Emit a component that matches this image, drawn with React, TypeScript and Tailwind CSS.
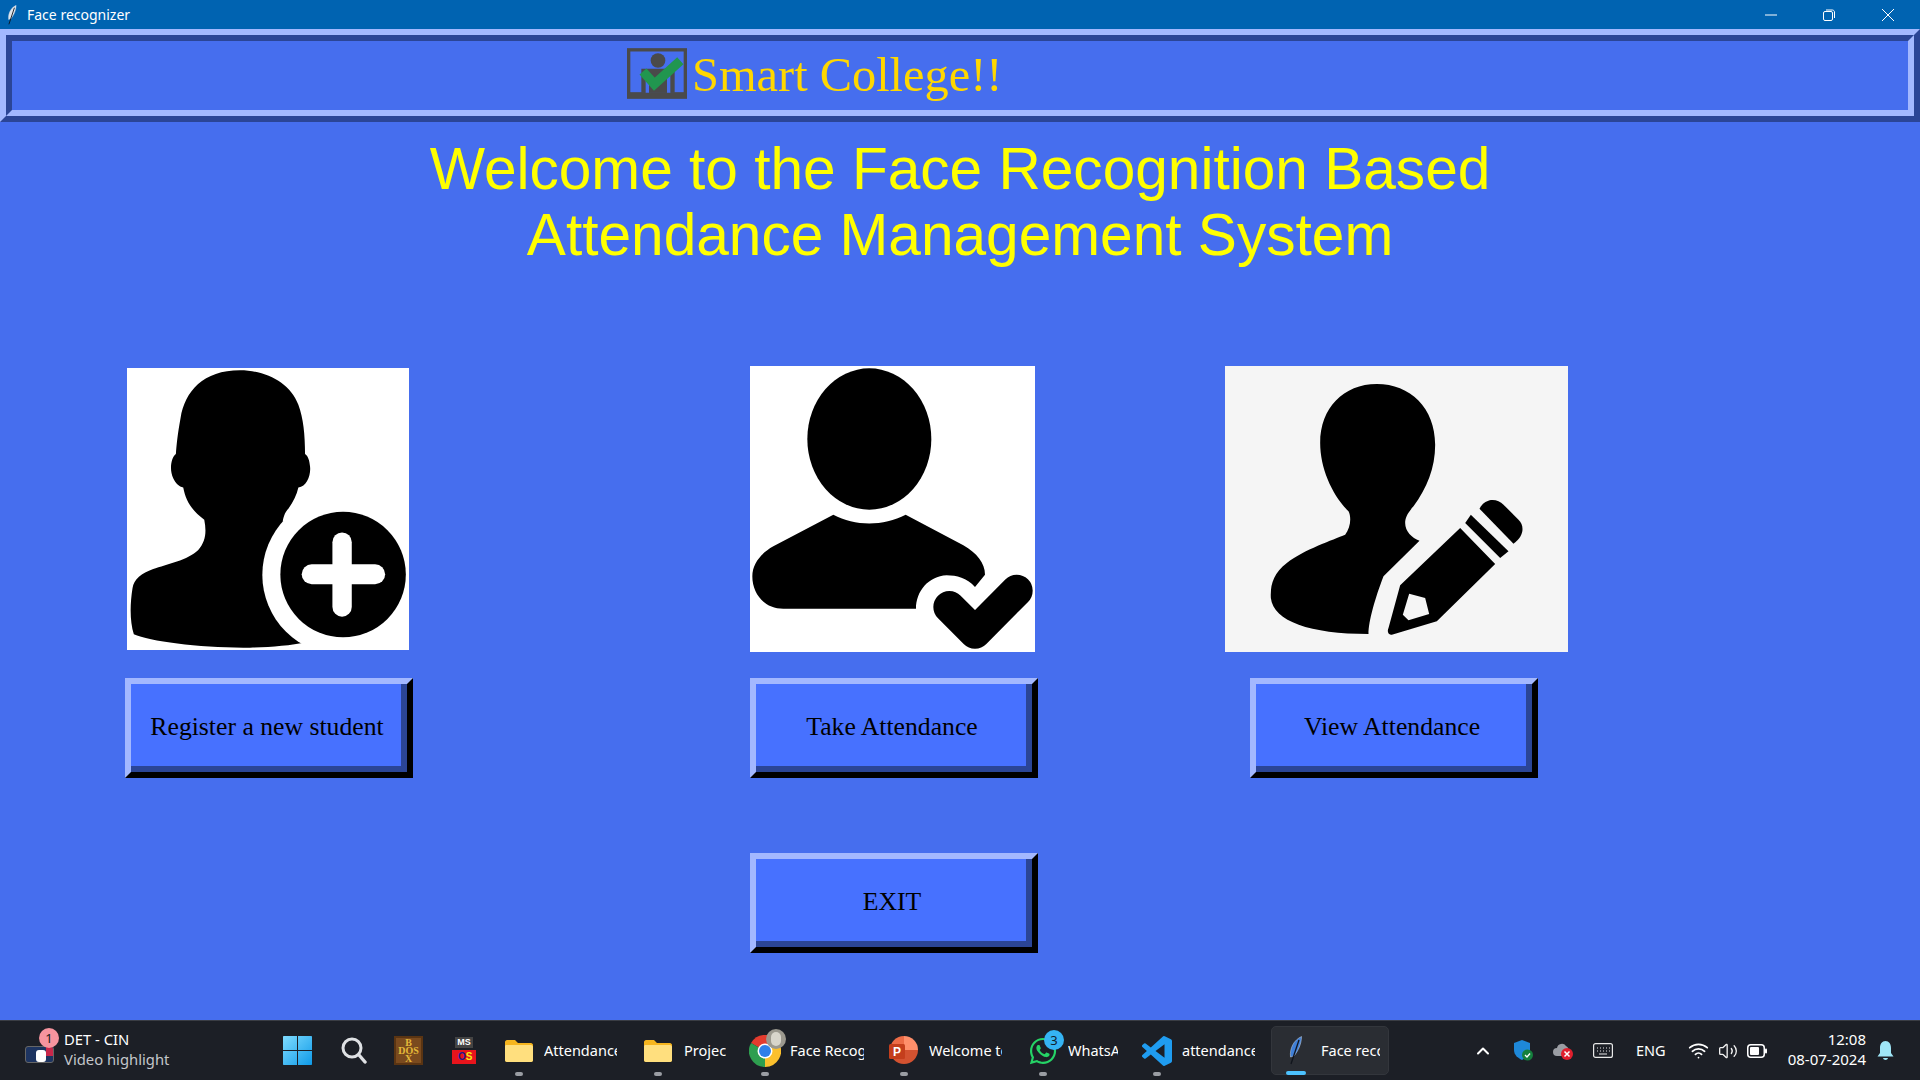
import type { ReactNode } from "react";
import { FaWhatsapp } from "react-icons/fa";
import { ChevronUp, Volume2, Wifi } from "lucide-react";

const SEGOE = "font-['Noto_Sans',sans-serif]";

function Feather({ className, fill }: { className: string; fill: string }) {
  return (
    <svg viewBox="0 0 13 29" className={className}>
      <path d="M12.5 0.5 C5 4 0.5 12 1.5 21 L5 20 C9 15 12.5 8 12.5 0.5Z" fill={fill} stroke="#c9d8ea" strokeWidth="0.5" />
      <path d="M10 4 L2 28" stroke="#10141c" strokeWidth="1.3" />
    </svg>
  );
}

function BevelButton({ label }: { label: string }) {
  return (
    <div className="w-[288px] h-[100px] border-[6px] border-t-[#a3b8ff] border-l-[#a3b8ff] border-r-black border-b-black">
      <div className="h-full border-r-[6px] border-b-[6px] border-r-[#2b4596] border-b-[#2b4596] bg-[#4771ff] flex items-center justify-center pl-[2px] pt-[4px]">
        <span className="font-['Liberation_Serif',serif] text-[25.7px] text-black whitespace-nowrap">{label}</span>
      </div>
    </div>
  );
}

function PersonAdd() {
  return (
    <svg viewBox="52 40 844 845" className="w-full h-full block">
      <path d="M390 47 C280 47 225 110 212 190 C203 240 200 270 198 298 C183 310 178 345 190 370 C197 385 208 395 220 398 C228 440 245 465 283 495 C290 530 288 560 265 585 C235 615 170 628 130 642 C95 655 72 672 68 700 C60 750 60 800 72 838 C120 860 280 880 420 878 C480 877 540 872 590 862 L590 500 L518 500 C522 480 527 470 535 462 C550 440 560 420 565 398 C590 395 603 360 600 335 C598 318 595 305 585 298 C585 240 580 190 565 150 C540 85 470 47 390 47Z" fill="#000" />
      <circle cx="697" cy="660" r="240" fill="#fff" />
      <circle cx="699" cy="659" r="188" fill="#000" />
      <rect x="667" y="533" width="58" height="252" rx="29" fill="#fff" />
      <rect x="575" y="628" width="250" height="60" rx="30" fill="#fff" />
    </svg>
  );
}

function PersonCheck() {
  return (
    <svg viewBox="30 34 855 858" className="w-full h-full block">
      <ellipse cx="388" cy="253" rx="186" ry="212" fill="#000" />
      <path d="M280 480 C345 515 430 515 497 480 L670 572 C710 595 735 625 735 660 L705 697 C680 670 650 662 620 662 C565 665 528 710 528 762 L130 762 C75 762 37 720 37 665 C37 625 65 595 100 575Z" fill="#000" />
      <path d="M628 757 L705 834 L830 708" fill="none" stroke="#000" strokeWidth="96" strokeLinecap="round" strokeLinejoin="round" />
    </svg>
  );
}

function PersonEdit() {
  return (
    <svg viewBox="45 34 1028 858" className="w-full h-full block">
      <path d="M500 88 C400 88 330 160 330 265 C330 340 365 420 415 470 C425 490 420 520 405 540 C370 555 280 585 230 625 C190 655 180 690 182 730 C190 800 300 838 475 838 C475 800 495 730 520 665 L628 558 C605 550 585 530 585 505 C585 490 592 475 610 455 C650 400 675 340 675 270 C675 160 600 88 500 88Z" fill="#000" />
      <path fillRule="evenodd" d="M750 520 L855 628 L680 800 L545 840 C535 842 530 830 535 820 L570 692Z M597 717 L645 730 L657 778 L595 797 L578 780Z" fill="#000" />
      <path d="M782 480 L895 590 L870 610 L765 505Z" fill="#000" />
      <path d="M808 462 C825 430 860 430 880 450 L925 495 C945 515 940 545 910 567Z" fill="#000" />
    </svg>
  );
}

function CollegeLogo() {
  return (
    <svg viewBox="52 38 180 152" className="w-[60px] h-[51px] shrink-0 mb-[5px]">
      <rect x="52" y="38" width="180" height="152" fill="#4a4a4a" />
      <rect x="62" y="48" width="160" height="122" fill="#466eee" />
      <circle cx="145" cy="75" r="22" fill="#4a4a4a" />
      <path d="M95 100 H195 V172 H95Z" fill="#4a4a4a" />
      <path d="M108 115 H118 V172 H108Z M172 115 H182 V172 H172Z" fill="#466eee" />
      <path d="M100 108 L134 146 L212 76" fill="none" stroke="#21964f" strokeWidth="28" />
    </svg>
  );
}

function TaskApp({ icon, label, textClass, active }: { icon: ReactNode; label: string; textClass: string; active?: boolean }) {
  return (
    <>
      <div className="relative shrink-0 h-[32px] flex items-center justify-center">
        {icon}
        <div className={active ? "absolute left-1/2 -translate-x-1/2 top-[36px] w-[20px] h-[4px] rounded-full bg-[#4cc2ff]" : "absolute left-1/2 -translate-x-1/2 top-[37px] w-[8px] h-[4px] rounded-full bg-[#9a9da3]"} />
      </div>
      <div className={textClass}>{label}</div>
    </>
  );
}

function Folder({ className }: { className: string }) {
  return (
    <svg viewBox="0 0 28 22" className={className}>
      <path d="M0 2 C0 1 1 0 2 0 H10 L13 3 H26 C27 3 28 4 28 5 V20 C28 21 27 22 26 22 H2 C1 22 0 21 0 20Z" fill="#f6b51e" />
      <path d="M0 6 C0 5 1 5 2 5 H26 C27 5 28 6 28 7 V20 C28 21 27 22 26 22 H2 C1 22 0 21 0 20Z" fill="#ffdf7e" />
    </svg>
  );
}

const labelClass = "text-[14.5px] text-white whitespace-nowrap overflow-hidden";

export default function App() {
  return (
    <div className="w-[1920px] h-[1080px] overflow-hidden flex flex-col bg-[#466eee]">
      {/* title bar */}
      <div className={`h-[29px] shrink-0 bg-[#0063b1] flex items-center text-white ${SEGOE}`}>
        <Feather className="w-[12px] h-[20px] ml-[6px]" fill="#dfe5ec" />
        <span className="ml-[9px] text-[14px]">Face recognizer</span>
        <div className="ml-auto flex items-center">
          <svg viewBox="0 0 12 12" className="w-[12px] h-[12px]"><path d="M0 6 H12" stroke="#fff" strokeWidth="1" /></svg>
          <svg viewBox="0 0 12 12" className="w-[12px] h-[12px] ml-[46px]" fill="none" stroke="#fff" strokeWidth="1"><rect x="0.5" y="2.5" width="9" height="9" rx="1.5" /><path d="M3 1 H9.5 C10.5 1 11.5 2 11.5 3 V9" /></svg>
          <svg viewBox="0 0 12 12" className="w-[12px] h-[12px] ml-[47px] mr-[26px]"><path d="M0 0 L12 12 M12 0 L0 12" stroke="#fff" strokeWidth="1" /></svg>
        </div>
      </div>

      {/* banner */}
      <div className="h-[93px] shrink-0 border-[6px] border-t-[#a3b8ff] border-l-[#a3b8ff] border-r-[#2b4596] border-b-[#2b4596]">
        <div className="h-full border-[6px] border-t-[#2b4596] border-l-[#2b4596] border-r-[#a3b8ff] border-b-[#a3b8ff] flex items-center pl-[615px]">
          <CollegeLogo />
          <span className="ml-[5px] font-['Liberation_Serif',serif] text-[48.4px] leading-none text-[#ffd700] whitespace-nowrap">Smart College!!</span>
        </div>
      </div>

      {/* main */}
      <div className="flex-1 min-h-0">
        <h1 className="mt-[14px] text-center font-['Liberation_Sans',sans-serif] text-[58.6px] leading-[66px] text-[#ffff00]">
          Welcome to the Face Recognition Based
          <br />
          Attendance Management System
        </h1>
        <div className="mt-[98px] flex items-start pl-[125px]">
          <div className="w-[288px]">
            <div className="ml-[2px] mt-[2px] w-[282px] h-[282px] bg-white">
              <PersonAdd />
            </div>
            <div className="mt-[28px]">
              <BevelButton label="Register a new student" />
            </div>
          </div>
          <div className="ml-[337px] w-[288px]">
            <div className="w-[285px] h-[286px] bg-white">
              <PersonCheck />
            </div>
            <div className="mt-[26px]">
              <BevelButton label="Take Attendance" />
            </div>
            <div className="mt-[75px]">
              <BevelButton label="EXIT" />
            </div>
          </div>
          <div className="ml-[187px] w-[343px]">
            <div className="w-[343px] h-[286px] bg-[#f5f5f5]">
              <PersonEdit />
            </div>
            <div className="mt-[26px] ml-[25px]">
              <BevelButton label="View Attendance" />
            </div>
          </div>
        </div>
      </div>

      {/* taskbar */}
      <div className={`relative h-[60px] shrink-0 bg-[#1c1f26] border-t border-[#3a3d44] flex items-center pl-[25px] ${SEGOE}`}>
        <div className="relative w-[29px] h-[17px] shrink-0 mt-[8px] rounded-[3px] overflow-hidden bg-[#1d3461] border border-[#666]">
          <div className="absolute left-[10px] top-[3px] w-[10px] h-[12px] rounded-[3px] bg-white" />
          <div className="absolute right-0 top-0 w-[7px] h-[9px] bg-[#c8274a]" />
        </div>
        <div className="absolute left-[39px] top-[7px] w-[20px] h-[20px] rounded-full bg-[#f6949f] text-[13px] leading-[20px] text-center text-[#1a1a1a]">1</div>
        <div className="ml-[10px] -mt-[4px] w-[219px] shrink-0 leading-[20px] text-[14.8px]">
          <div className="text-white">DET - CIN</div>
          <div className="text-[#c4c6ca]">Video highlight</div>
        </div>

        <svg viewBox="0 0 29 29" className="w-[29px] h-[29px] shrink-0">
          <defs>
            <linearGradient id="win" x1="0" y1="0" x2="1" y2="1">
              <stop offset="0" stopColor="#7fdcff" />
              <stop offset="1" stopColor="#0f9ae8" />
            </linearGradient>
          </defs>
          <path d="M0 1 C0 .4 .4 0 1 0 H14 V14 H0Z M15 0 H28 C28.6 0 29 .4 29 1 V14 H15Z M0 15 H14 V29 H1 C.4 29 0 28.6 0 28Z M15 15 H29 V28 C29 28.6 28.6 29 28 29 H15Z" fill="url(#win)" />
        </svg>
        <svg viewBox="0 0 26 27" className="w-[26px] h-[27px] ml-[29px] shrink-0" fill="none" strokeLinecap="round">
          <circle cx="11" cy="11" r="9" stroke="#dfe1e4" strokeWidth="3" />
          <path d="M18 18 L24 25" stroke="#dfe1e4" strokeWidth="3.4" />
        </svg>
        <div className="w-[29px] h-[29px] ml-[27px] shrink-0 bg-[#7a4a1e] border-2 border-[#5a3412] flex flex-col items-center justify-center font-['Liberation_Serif',serif] font-bold text-[10px] leading-[8px] text-[#e4b93a] whitespace-nowrap">
          <span>B</span>
          <span>DOS</span>
          <span>X</span>
        </div>
        <div className="w-[24px] h-[27px] ml-[29px] shrink-0 flex flex-col items-center font-['Liberation_Sans',sans-serif] font-bold">
          <span className="w-[18px] h-[11px] bg-[#444] text-white text-[9px] leading-[11px] text-center">MS</span>
          <div className="mt-[2px] w-[24px] h-[14px] flex bg-[#e8141c] text-[10px] leading-[14px]">
            <span className="pl-[6px] text-[#1b1b8f]">O</span>
            <span className="text-[#f2ee16]">S</span>
          </div>
        </div>

        <div className="ml-[29px] shrink-0" />
        <TaskApp icon={<Folder className="w-[28px] h-[22px]" />} label="Attendance" textClass={`ml-[11px] w-[73px] ${labelClass}`} />
        <div className="ml-[27px] shrink-0" />
        <TaskApp icon={<Folder className="w-[28px] h-[22px]" />} label="Project" textClass={`ml-[12px] w-[42px] ${labelClass}`} />
        <div className="ml-[23px] shrink-0" />
        <TaskApp
          icon={
            <div className="relative w-[32px] h-[32px]">
              <svg viewBox="0 0 32 32" className="w-[32px] h-[32px]">
                <path d="M16 16 L2.1 8 A16 16 0 0 1 29.9 8Z" fill="#e33b2e" />
                <path d="M16 16 L29.9 8 A16 16 0 0 1 16 32Z" fill="#fbc02d" />
                <path d="M16 16 L16 32 A16 16 0 0 1 2.1 8Z" fill="#2e9e4f" />
                <circle cx="16" cy="16" r="7.5" fill="#fff" />
                <circle cx="16" cy="16" r="6" fill="#2f7fe8" />
              </svg>
              <div className="absolute left-[17px] -top-[6px] w-[20px] h-[20px] rounded-full bg-[#9b988e] overflow-hidden">
                <div className="mx-auto mt-[3px] w-[10px] h-[14px] rounded-full bg-[#d8d5cb]" />
              </div>
            </div>
          }
          label="Face Recog"
          textClass={`ml-[9px] w-[74px] ${labelClass}`}
        />
        <div className="ml-[25px] shrink-0" />
        <TaskApp
          icon={
            <svg viewBox="0 0 29 29" className="w-[29px] h-[29px]">
              <path d="M15 0 A14 14 0 0 1 29 14 H15Z" fill="#ff8f6b" />
              <path d="M15 0 A14 14 0 0 0 1 14 H15Z" fill="#ed6c47" />
              <path d="M1 14 A14 14 0 0 0 29 14Z" fill="#d35230" />
              <rect x="0" y="8" width="16" height="15" rx="1.5" fill="#c43e1c" />
              <text x="8" y="20" textAnchor="middle" fontSize="12" fontWeight="700" fill="#fff" fontFamily="Liberation Sans">P</text>
            </svg>
          }
          label="Welcome to"
          textClass={`ml-[11px] w-[73px] ${labelClass}`}
        />
        <div className="ml-[26px] shrink-0" />
        <TaskApp
          icon={
            <div className="relative w-[30px] h-[30px]">
              <FaWhatsapp className="w-[30px] h-[30px] text-[#25d366]" />
              <div className="absolute left-[16px] -top-[6px] w-[20px] h-[20px] rounded-full bg-[#35b4f4] text-[13px] leading-[20px] text-center text-[#10202c]">3</div>
            </div>
          }
          label="WhatsApp"
          textClass={`ml-[10px] w-[50px] ${labelClass}`}
        />
        <div className="ml-[24px] shrink-0" />
        <TaskApp
          icon={
            <svg viewBox="0 0 24 24" className="w-[30px] h-[30px]">
              <path fill="#1f9cf0" d="M23.15 2.587L18.21.21a1.494 1.494 0 0 0-1.705.29l-9.46 8.63-4.12-3.128a.999.999 0 0 0-1.276.057L.327 7.261A1 1 0 0 0 .326 8.74L3.899 12 .326 15.26a1 1 0 0 0 .001 1.479L1.65 17.94a.999.999 0 0 0 1.276.057l4.12-3.128 9.46 8.63a1.492 1.492 0 0 0 1.704.29l4.942-2.377A1.5 1.5 0 0 0 24 20.06V3.939a1.5 1.5 0 0 0-.85-1.352zm-5.146 14.861L10.826 12l7.178-5.448v10.896z" />
            </svg>
          }
          label="attendance"
          textClass={`ml-[10px] w-[73px] ${labelClass}`}
        />
        <div className="relative ml-[34px] flex items-center">
          <div className="absolute -left-[18px] -top-[9px] w-[118px] h-[49px] rounded-[5px] bg-[#2a2d33] border border-[#33363c]" />
          <div className="relative flex items-center">
            <TaskApp icon={<Feather className="w-[13px] h-[29px]" fill="#3f7fd8" />} label="Face recognizer" textClass={`ml-[19px] w-[59px] ${labelClass}`} active />
          </div>
        </div>

        <ChevronUp className="w-[20px] h-[20px] ml-[93px] text-white shrink-0" strokeWidth={2.4} />
        <svg viewBox="0 0 19 21" className="w-[19px] h-[21px] ml-[21px] shrink-0">
          <path d="M8 0 L16 3 V10 C16 15 12 18 8 20 C4 18 0 15 0 10 V3Z" fill="#1e88d8" />
          <circle cx="13.5" cy="15" r="5.5" fill="#15803d" />
          <path d="M11 15 L13 17 L16 13.5" stroke="#fff" strokeWidth="1.3" fill="none" />
        </svg>
        <svg viewBox="0 0 20 18" className="w-[20px] h-[18px] ml-[20px] shrink-0">
          <path d="M4 14 A4 4 0 0 1 4 6 A5 5 0 0 1 13 4 A4 4 0 0 1 15 9 V14Z" fill="#9a9da3" />
          <circle cx="14" cy="12" r="6" fill="#e01f2d" />
          <path d="M11.5 9.5 L16.5 14.5 M16.5 9.5 L11.5 14.5" stroke="#fff" strokeWidth="1.5" />
        </svg>
        <svg viewBox="0 0 20 15" className="w-[20px] h-[15px] ml-[20px] shrink-0" fill="none" stroke="#e8e8e8">
          <rect x="0.6" y="0.6" width="18.8" height="13.8" rx="2" strokeWidth="1.2" />
          <path d="M4 5 H5 M7 5 H8 M10 5 H11 M13 5 H14 M16 5 H17 M4 8 H5 M7 8 H8 M10 8 H11 M13 8 H14 M16 8 H17 M6 11 H14" strokeWidth="1.2" />
        </svg>
        <span className="ml-[23px] w-[30px] shrink-0 text-[14.5px] text-white">ENG</span>
        <Wifi className="w-[21px] h-[21px] ml-[22px] text-white shrink-0" strokeWidth={2} />
        <Volume2 className="w-[20px] h-[20px] ml-[9px] text-[#f0f0f0] shrink-0" strokeWidth={1.6} />
        <svg viewBox="0 0 20 14" className="w-[20px] h-[14px] ml-[9px] shrink-0">
          <rect x="0.75" y="0.75" width="16.5" height="12.5" rx="3" fill="none" stroke="#fff" strokeWidth="1.5" />
          <rect x="3" y="3" width="9" height="8" rx="1" fill="#fff" />
          <rect x="18" y="4.5" width="2" height="5" rx="1" fill="#fff" />
        </svg>
        <div className="ml-[21px] -mt-[4px] w-[78px] shrink-0 flex flex-col items-end text-[15px] leading-[20px] text-white whitespace-nowrap">
          <div>12:08</div>
          <div>08-07-2024</div>
        </div>
        <svg viewBox="0 0 17 20" className="w-[17px] h-[20px] ml-[11px] shrink-0">
          <path d="M8.5 0 C12 0 14 3 14 7 V12 L16.5 15.5 H0.5 L3 12 V7 C3 3 5 0 8.5 0Z" fill="#9fe6f7" />
          <path d="M6 17 H11 C10.5 19.5 6.5 19.5 6 17Z" fill="#9fe6f7" />
        </svg>
      </div>
    </div>
  );
}
